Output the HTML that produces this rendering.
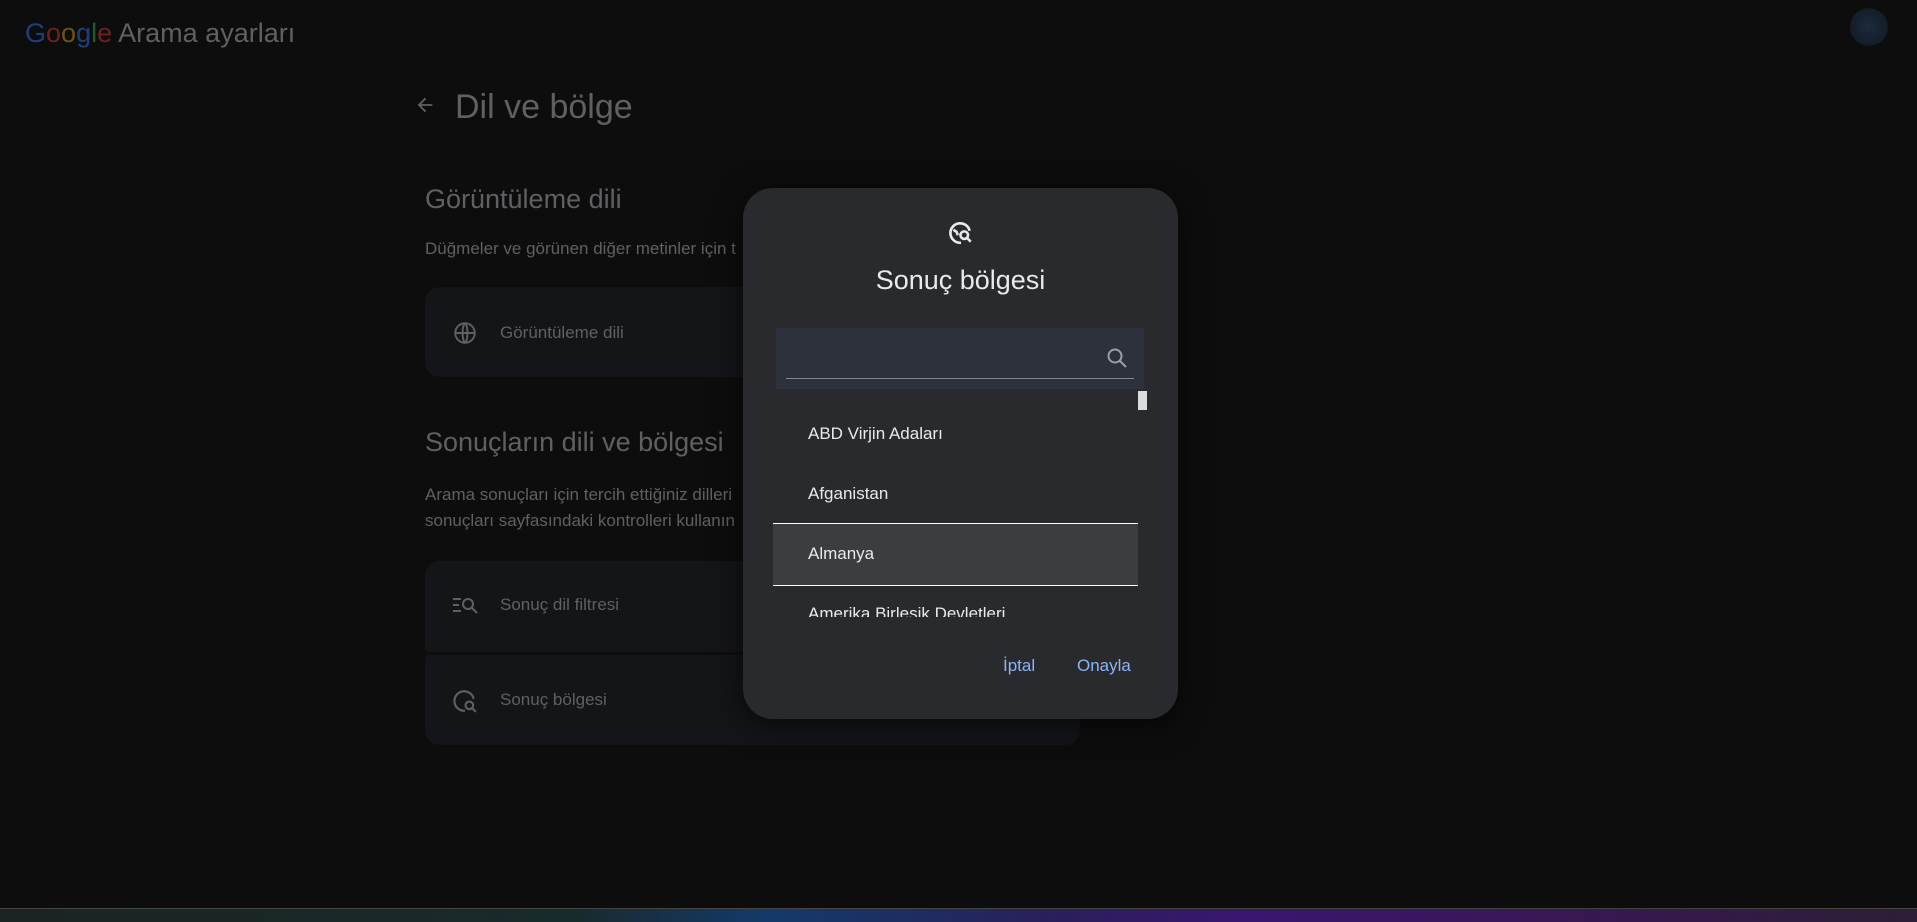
<!DOCTYPE html>
<html><head><meta charset="utf-8"><style>
*{margin:0;padding:0;box-sizing:border-box}
body{width:1917px;height:922px;background:#0d0d0d;font-family:"Liberation Sans",sans-serif;position:relative;overflow:hidden;color:#5f6063}
.a{position:absolute;white-space:nowrap}
.card{position:absolute;left:425px;width:655px;background:#141519;}
.modal{position:absolute;left:743px;top:188px;width:435px;height:531px;background:#292a2d;border-radius:30px;box-shadow:0 6px 30px rgba(0,0,0,.6)}
.item{position:absolute;left:65px;font-size:17px;line-height:20px;color:#e8eaed}
</style></head><body>
<div class="a" style="left:25px;top:18px;font-size:27px"><span style="color:#1f3f78">G</span><span style="color:#6a2220">o</span><span style="color:#6a5510">o</span><span style="color:#1f3f78">g</span><span style="color:#1d5a2c">l</span><span style="color:#6a2220">e</span> <span style="color:#5f6063">Arama ayarları</span></div>
<div class="a" style="left:1850px;top:8px;width:38px;height:38px;border-radius:50%;background:radial-gradient(#1c2a3a,#0f1822)"></div>
<svg class="a" style="left:414px;top:94px" width="22" height="22" viewBox="0 0 24 24"><path d="M20 11H7.8l5.6-5.6L12 4l-8 8 8 8 1.4-1.4L7.8 13H20z" fill="#5f6063"/></svg>
<div class="a" style="left:455px;top:88px;font-size:34px">Dil ve bölge</div>
<div class="a" style="left:425px;top:184px;font-size:27px">Görüntüleme dili</div>
<div class="a" style="left:425px;top:239px;font-size:17px">Düğmeler ve görünen diğer metinler için t</div>
<div class="card" style="top:287px;height:90px;border-radius:15px"></div>
<svg class="a" style="left:452px;top:320px" width="26" height="26" viewBox="0 0 24 24" fill="none" stroke="#5f6063" stroke-width="1.8"><circle cx="12" cy="12" r="9"/><path d="M3 12h18M12 3c3 3 3 15 0 18M12 3c-3 3-3 15 0 18"/></svg>
<div class="a" style="left:500px;top:323px;font-size:17px">Görüntüleme dili</div>
<div class="a" style="left:425px;top:427px;font-size:27px">Sonuçların dili ve bölgesi</div>
<div class="a" style="left:425px;top:485px;font-size:17px">Arama sonuçları için tercih ettiğiniz dilleri</div>
<div class="a" style="left:425px;top:511px;font-size:17px">sonuçları sayfasındaki kontrolleri kullanın</div>
<div class="card" style="top:561px;height:91px;border-radius:15px 15px 3px 3px"></div>
<div class="card" style="top:655px;height:90px;border-radius:3px 3px 15px 15px"></div>
<svg class="a" style="left:452px;top:594px" width="26" height="22" viewBox="0 0 26 22" fill="none" stroke="#5f6063" stroke-width="2"><path d="M1 5h8M1 11h6M1 17h8"/><circle cx="16" cy="10" r="5"/><path d="M20 14l5 5"/></svg>
<div class="a" style="left:500px;top:595px;font-size:17px">Sonuç dil filtresi</div>
<svg class="a" style="left:452px;top:688px" width="26" height="26" viewBox="0 0 24 24" fill="none" stroke="#5f6063" stroke-width="2"><path d="M20 10A9 9 0 1 0 12 21"/><circle cx="16" cy="16" r="3.5"/><path d="M18.5 18.5L22 22"/></svg>
<div class="a" style="left:500px;top:690px;font-size:17px">Sonuç bölgesi</div>
<div class="modal">
<svg class="a" style="left:205px;top:32px" width="26" height="26" viewBox="0 0 24 24" fill="none" stroke="#e8eaed" stroke-width="2.4"><path d="M20 10A9 9 0 1 0 12 21"/><path d="M5 9l3 2 1 3" /><circle cx="15" cy="14" r="3.5"/><path d="M17.5 16.5L21 20"/></svg>
<div class="a" style="left:0;width:435px;text-align:center;top:76px;font-size:27px;line-height:32px;color:#e8eaed">Sonuç bölgesi</div>
<div class="a" style="left:33px;top:140px;width:368px;height:61px;background:#2d313b"></div>
<div class="a" style="left:43px;top:190px;width:348px;height:1px;background:#80868b"></div>
<svg class="a" style="left:362px;top:158px" width="24" height="24" viewBox="0 0 24 24" fill="none" stroke="#9aa0a6" stroke-width="2"><circle cx="10" cy="10" r="6.5"/><path d="M15 15l6 6"/></svg>
<div class="a" style="left:395px;top:203px;width:9px;height:19px;background:#dadce0"></div>
<div style="position:absolute;left:0;top:205px;width:435px;height:224px;overflow:hidden">
<div class="item" style="top:31px">ABD Virjin Adaları</div>
<div class="item" style="top:91px">Afganistan</div>
<div class="a" style="left:30px;top:130px;width:365px;height:63px;background:#3c3d40;border-top:1.5px solid #fff;border-bottom:1.5px solid #fff"></div>
<div class="item" style="top:151px">Almanya</div>
<div class="item" style="top:211px">Amerika Birleşik Devletleri</div>
</div>
<div class="a" style="left:260px;top:468px;font-size:17px;line-height:20px;color:#8ab4f8">İptal</div>
<div class="a" style="left:334px;top:468px;font-size:17px;line-height:20px;color:#8ab4f8">Onayla</div>
</div>
<div class="a" style="left:0;top:908px;width:1917px;height:14px;border-top:1px solid #444;background:linear-gradient(90deg,#1b2422 0%,#192a2c 30%,#133a6a 40%,#2a1f5a 55%,#3a1670 65%,#3a1656 80%,#2c1f36 100%)"></div>
</body></html>
